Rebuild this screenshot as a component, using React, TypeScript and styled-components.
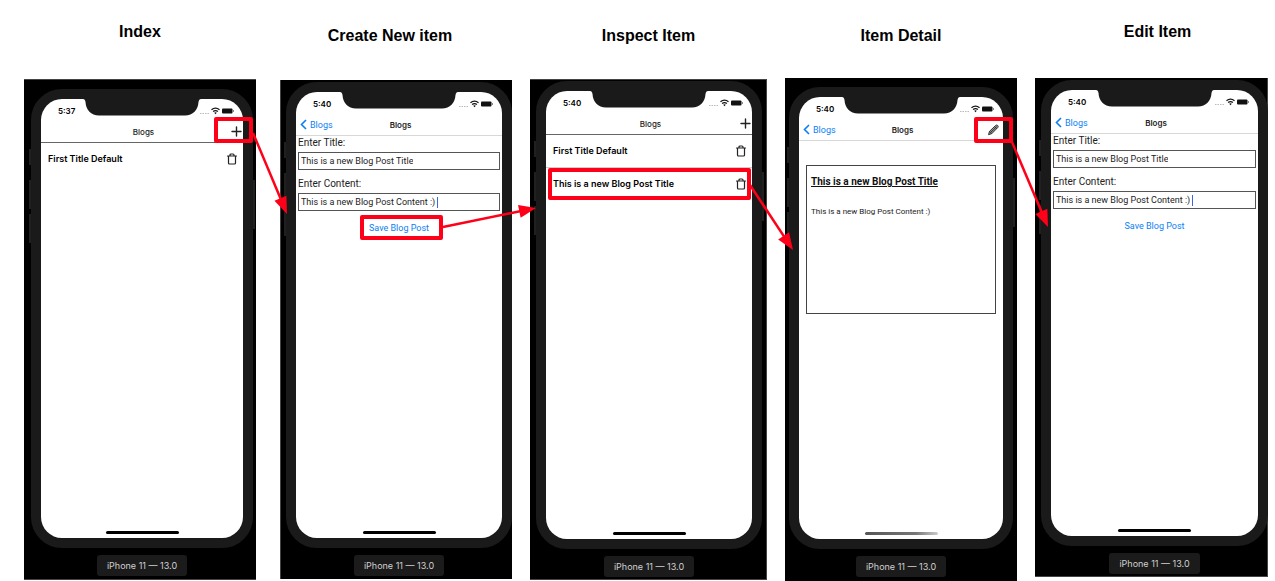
import React from 'react';
import styled, { createGlobalStyle, css } from 'styled-components';

const RED = '#ff0019';
const BLUE = '#0a7ff5';
const UI_FONT = 'Inter, "Liberation Sans", sans-serif';
const TEXT_FONT = 'Roboto, "Liberation Sans", sans-serif';

const GlobalStyle = createGlobalStyle`
  * { box-sizing: border-box; }
  body { margin: 0; background: #fff; color: #000; overflow-x: hidden; }
  button, input { font: inherit; color: inherit; margin: 0; padding: 0; border: 0; background: none; outline: 0; }
`;

const Board = styled.main`
  display: flex;
  align-items: flex-start;
  gap: 18px;
  padding: 0 7px 0 24px;
`;

const Step = styled.section<{ $grow: number; $after?: number }>`
  flex: ${p => p.$grow} 1 0;
  min-width: 0;
  margin-right: ${p => p.$after ?? 0}px;
`;

const Caption = styled.h2<{ $top: number; $height: number; $pad?: string }>`
  margin: 0;
  height: ${p => p.$height}px;
  padding: ${p => p.$top}px 0 0;
  ${p => p.$pad && css`padding-${p.$pad}: 12px;`}
  font: bold 16px/18px "Liberation Sans", Arial, sans-serif;
  text-align: center;
`;

const Simulator = styled.div<{ $height: number; $pad: string; $edges: string }>`
  position: relative;
  display: flex;
  flex-direction: column;
  min-height: ${p => p.$height}px;
  padding: ${p => p.$pad};
  background: #000;
  box-shadow: ${p => p.$edges};
`;

const Device = styled.div`
  position: relative;
  flex: 1;
  display: flex;
  border: 10px solid #1a1a1a;
  border-radius: 31px;
  background: #1a1a1a;
`;

const SideKey = styled.span<{ $side: 'left' | 'right'; $top: number; $height: number }>`
  position: absolute;
  ${p => p.$side}: -12px;
  top: ${p => p.$top}px;
  width: 2px;
  height: ${p => p.$height}px;
  background: #202020;
`;

const Screen = styled.div`
  position: relative;
  flex: 1;
  min-width: 0;
  display: flex;
  flex-direction: column;
  border-radius: 21px;
  background: #fff;
  font-family: ${TEXT_FONT};
`;

const Notch = styled.svg`
  position: absolute;
  top: -1px;
  left: 50%;
  margin-left: -59px;
`;

const StatusBar = styled.div`
  display: flex;
  align-items: center;
  justify-content: space-between;
  height: 24px;
  padding: 0 9px 0 17px;
  font-family: ${UI_FONT};
  font-size: 8px;
  line-height: 12px;
  font-weight: 600;
`;

const NavBar = styled.header<{ $strong?: boolean }>`
  display: grid;
  grid-template-columns: 1fr auto 1fr;
  align-items: center;
  height: 20px;
  padding: 0 1px 2px 4px;
  border-bottom: 1px solid ${p => (p.$strong ? '#666' : '#d8d8d8')};
`;

const NavTitle = styled.h3<{ $soft?: boolean }>`
  grid-column: 2;
  margin: 0;
  font-family: ${UI_FONT};
  font-size: 8px;
  line-height: 12px;
  font-weight: ${p => (p.$soft ? 500 : 600)};
  color: #222;
`;

const BackLink = styled.a`
  grid-column: 1;
  grid-row: 1;
  display: flex;
  align-items: center;
  gap: 3px;
  font-size: 9px;
  line-height: 12px;
  color: ${BLUE};
  text-decoration: none;
`;

const IconButton = styled.button`
  display: flex;
  grid-column: 3;
  grid-row: 1;
  justify-self: end;
`;

const Row = styled.li<{ $divided?: boolean }>`
  position: relative;
  display: flex;
  align-items: center;
  justify-content: space-between;
  height: 33px;
  padding: 0 5px 0 7px;
  border-bottom: 1px solid ${p => (p.$divided ? '#ccc' : 'transparent')};
  font-family: ${UI_FONT};
  font-size: 9px;
  line-height: 12px;
  font-weight: 600;
  color: #000;
`;

const List = styled.ul`
  margin: 0;
  padding: 0;
  list-style: none;
`;

const Form = styled.form`
  display: flex;
  flex-direction: column;
  padding: 0 2px;
`;

const Label = styled.label`
  margin-bottom: 2px;
  font-size: 10px;
  line-height: 14px;
  color: #222;
`;

const Field = styled.div`
  display: flex;
  align-items: center;
  height: 18px;
  margin-bottom: 7px;
  padding: 0 2px;
  border: 1px solid #555;
`;

const TextInput = styled.input`
  field-sizing: content;
  min-width: 0;
  font-size: 9px;
  line-height: 14px;
  color: #222;
`;

const Caret = styled.span`
  width: 1px;
  height: 11px;
  margin-left: 2px;
  background: #3d63e8;
`;

const SaveButton = styled.button`
  position: relative;
  align-self: center;
  height: 20px;
  font-size: 9px;
  line-height: 20px;
  color: ${BLUE};
`;

const Card = styled.article`
  height: 149px;
  margin: 24px 7px 0;
  padding: 8px 4px;
  border: 1px solid #444;
`;

const CardTitle = styled.h4`
  margin: 0 0 17px;
  font-size: 10px;
  line-height: 16px;
  font-weight: 700;
  color: #111;
  text-decoration: underline;
`;

const CardText = styled.p`
  margin: 0;
  font-size: 8px;
  line-height: 10px;
  color: #222;
`;

const HomeBar = styled.div<{ $fading?: boolean }>`
  width: 73px;
  height: 3px;
  margin: auto auto 4px;
  border-radius: 2px;
  background: ${p => (p.$fading ? 'linear-gradient(90deg, #555, #777 70%, #ccc)' : '#000')};
`;

const Footer = styled.footer`
  display: flex;
  justify-content: center;
  padding: 7px 0 3px;
`;

const ModelTag = styled.span`
  padding: 0 10px;
  border-radius: 3px;
  background: #1b1b1b;
  font-family: ${UI_FONT};
  font-size: 9px;
  line-height: 21px;
  color: #d0d0d0;
  white-space: nowrap;
`;

const Callout = styled.span<{ $inset: string }>`
  position: absolute;
  z-index: 2;
  inset: ${p => p.$inset};
  border: 4px solid ${RED};
  border-radius: 2px;
  pointer-events: none;
`;

const NavCallout = styled(Callout)`
  width: 39px;
  height: 26px;
`;

const ArrowSvg = styled.svg<{ $top: number; $right: number }>`
  position: absolute;
  z-index: 3;
  top: ${p => p.$top}px;
  right: ${p => p.$right}px;
  overflow: visible;
  pointer-events: none;
`;

type ArrowProps = { top: number; right: number; width: number; height: number; rise?: boolean };

/* A straight arrow across its box, downwards or (rise) upwards, with the head at the right. */
function Arrow({ top, right, width, height, rise }: ArrowProps) {
  const y1 = rise ? height : 0;
  const y2 = rise ? 0 : height;
  const angle = (Math.atan2(y2 - y1, width) * 180) / Math.PI;
  const length = Math.hypot(width, height);
  return (
    <ArrowSvg $top={top} $right={right} width={width} height={height} aria-hidden="true">
      <g transform={`translate(0 ${y1}) rotate(${angle})`} fill={RED}>
        <rect x="0" y="-1.25" width={length - 14} height="2.5" />
        <path d={`M${length} 0l-17 -6.5v13z`} />
      </g>
    </ArrowSvg>
  );
}

const PlusIcon = () => (
  <svg width="11" height="11" viewBox="0 0 11 11" fill="none" stroke="#222" strokeWidth="1.4" strokeLinecap="round">
    <path d="M5.5 1v9M1 5.5h9" />
  </svg>
);

const TrashIcon = () => (
  <svg width="12" height="12" viewBox="0 0 24 24" fill="none" stroke="#222" strokeWidth="2.4" strokeLinecap="round" strokeLinejoin="round">
    <path d="M3 6h18M19 6v14a2 2 0 0 1-2 2H7a2 2 0 0 1-2-2V6M8 6V4a2 2 0 0 1 2-2h4a2 2 0 0 1 2 2v2" />
  </svg>
);

const PencilIcon = () => (
  <svg width="15" height="12" viewBox="0 0 15 12" fill="none" stroke="#333" strokeWidth="1" strokeLinejoin="round">
    <path d="M1.500 10.700l1-3.400L8.700 1.400q1-.8 2 .1t.1 2L4.800 9.600z" fill="#999" />
    <path d="M2.500 7.300l2.300 2.300M7.500 2.500l2.300 2.200M3.700 8.400l6-5.800" />
  </svg>
);

const StatusIcons = () => (
  <svg width="35" height="10" viewBox="0 0 35 10" aria-hidden="true">
    <g fill="#bbb">
      <rect x="1" y="7" width="1.5" height="1" />
      <rect x="3.5" y="7" width="1.5" height="1" />
      <rect x="6" y="7" width="1.5" height="1" />
      <rect x="8.5" y="7" width="1.5" height="1" />
    </g>
    <g fill="none" stroke="#111" strokeWidth="1.4">
      <path d="M12.500 3.700q4-3.200 8 0M14.100 5.500q2.400-1.800 4.800 0" />
    </g>
    <path d="M15.200 6.700q1.300-.9 2.600 0l-1.300 1.500z" fill="#111" />
    <rect x="23" y="2.500" width="10.500" height="5" rx="1" fill="#111" />
    <rect x="34" y="4" width="1" height="2" fill="#888" />
  </svg>
);

type PhoneProps = {
  caption: string;
  captionTop: number;
  captionHeight: number;
  captionPad?: string;
  grow: number;
  after?: number;
  height: number;
  pad: string;
  edges?: string;
  flush?: boolean;
  time?: string;
  back?: boolean;
  strong?: boolean;
  fading?: boolean;
  action?: React.ReactNode;
  arrow?: React.ReactNode;
  children: React.ReactNode;
};

function Phone(p: PhoneProps) {
  return (
    <Step $grow={p.grow} $after={p.after}>
      <Caption $top={p.captionTop} $height={p.captionHeight} $pad={p.captionPad}>{p.caption}</Caption>
      <Simulator $height={p.height} $pad={p.pad} $edges={p.edges ?? 'none'}>
        <Device>
          <SideKey $side="left" $top={50} $height={16} />
          <SideKey $side="left" $top={81} $height={29} />
          <SideKey $side="left" $top={115} $height={29} />
          {!p.flush && <SideKey $side="right" $top={81} $height={49} />}
          <Screen>
            <Notch width="118" height="18" viewBox="0 0 118 18" fill="#1a1a1a" aria-hidden="true">
              <path d="M0 0H118V1Q116 1 115.500 4C115 12 110 17.500 102 17.500H16C8 17.500 3 12 2.500 4Q2 1 0 1z" />
            </Notch>
            <StatusBar>
              <span>{p.time ?? '5:40'}</span>
              <StatusIcons />
            </StatusBar>
            <NavBar $strong={p.strong}>
              {p.back && (
                <BackLink href="#blogs">
                  <svg width="7" height="11" viewBox="0 0 7 11" fill="none" stroke={BLUE} strokeWidth="1.6">
                    <path d="M6 1L1.500 5.500L6 10" />
                  </svg>
                  Blogs
                </BackLink>
              )}
              <NavTitle $soft={p.strong}>Blogs</NavTitle>
              {p.action}
            </NavBar>
            {p.children}
            <HomeBar $fading={p.fading} />
          </Screen>
        </Device>
        <Footer><ModelTag>iPhone 11 — 13.0</ModelTag></Footer>
        {p.arrow}
      </Simulator>
    </Step>
  );
}

function PostForm({ id, callout }: { id: string; callout?: boolean }) {
  return (
    <Form>
      <Label htmlFor={`${id}-title`}>Enter Title:</Label>
      <Field><TextInput id={`${id}-title`} defaultValue="This is a new Blog Post Title" /></Field>
      <Label htmlFor={`${id}-content`}>Enter Content:</Label>
      <Field>
        <TextInput id={`${id}-content`} defaultValue="This is a new Blog Post Content :)" />
        <Caret />
      </Field>
      <SaveButton type="button">
        Save Blog Post
        {callout && <Callout $inset="-3px -14px -2px -9px" />}
      </SaveButton>
    </Form>
  );
}

function PostRow({ title, divided, callout }: { title: string; divided?: boolean; callout?: boolean }) {
  return (
    <Row $divided={divided}>
      <span>{title}</span>
      <IconButton aria-label="Delete post"><TrashIcon /></IconButton>
      {callout && <Callout $inset="0 1px 0 2px" />}
    </Row>
  );
}

const AddButton = () => <IconButton aria-label="Add post"><PlusIcon /></IconButton>;

export default function App() {
  return (
    <>
      <GlobalStyle />
      <Board>
        <Phone
          caption="Index" captionTop={23} captionHeight={79} grow={232} after={6} height={501}
          pad="10px 3px 1px 7px" edges="inset 0 1px #444, inset 0 -1px #444" time="5:37" strong
          action={<><AddButton /><NavCallout $inset="18px -10px auto auto" /></>}
          arrow={<Arrow top={54} right={-31} width={34} height={81} />}
        >
          <List><PostRow title="First Title Default" /></List>
        </Phone>
        <Phone
          caption="Create New item" captionTop={27} captionHeight={80} captionPad="right" grow={232} height={499}
          pad="2px 0 0 6px" edges="inset 1px 0 #444" back flush
          arrow={<Arrow top={128} right={-24} width={93} height={19} rise />}
        >
          <PostForm id="create" callout />
        </Phone>
        <Phone
          caption="Inspect Item" captionTop={27} captionHeight={79} grow={237} height={501}
          pad="2px 5px 0 6px" edges="inset 0 1px #444, inset -1px -1px #444" strong
          action={<AddButton />}
          arrow={<Arrow top={106} right={-26} width={43} height={65} />}
        >
          <List>
            <PostRow title="First Title Default" divided />
            <PostRow title="This is a new Blog Post Title" callout />
          </List>
        </Phone>
        <Phone
          caption="Item Detail" captionTop={27} captionHeight={78} grow={232} height={503}
          pad="9px 4px 1px 4px" back fading
          action={<><IconButton aria-label="Edit post"><PencilIcon /></IconButton><NavCallout $inset="20px -10px auto auto" /></>}
          arrow={<Arrow top={64} right={-31} width={36} height={85} />}
        >
          <Card>
            <CardTitle>This is a new Blog Post Title</CardTitle>
            <CardText>This is a new Blog Post Content :)</CardText>
          </Card>
        </Phone>
        <Phone
          caption="Edit Item" captionTop={23} captionHeight={78} captionPad="left" grow={233} height={499}
          pad="2px 0 0 6px" edges="inset -1px -1px #444" back flush
        >
          <PostForm id="edit" />
        </Phone>
      </Board>
    </>
  );
}
